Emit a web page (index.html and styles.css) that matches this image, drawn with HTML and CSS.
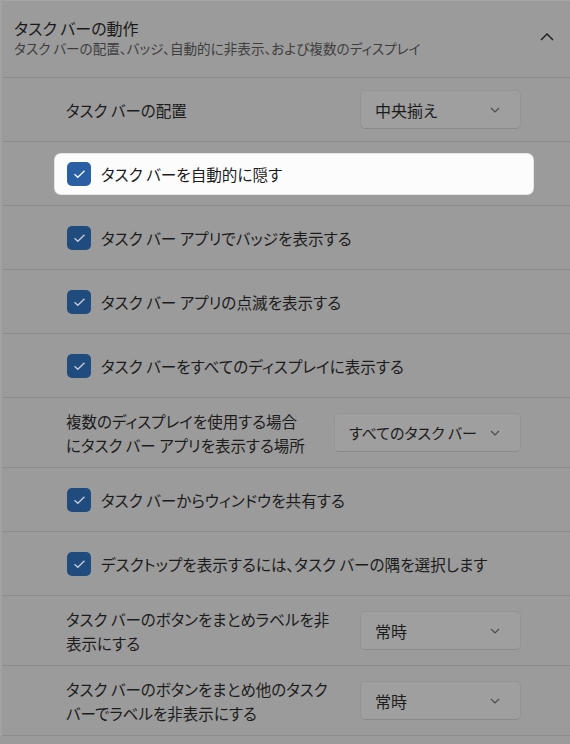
FILE: index.html
```html
<!DOCTYPE html>
<html lang="ja">
<head>
  <meta charset="UTF-8">
  <meta name="viewport" content="width=device-width, initial-scale=1.0">
  <title>タスク バーの動作</title>
  <link rel="stylesheet" href="styles.css">
</head>
<body>
  <div class="panel">
    <div class="panel-head">
      <div>
        <h2>タスク バーの動作</h2>
        <p class="sub">タスク バーの配置、バッジ、自動的に非表示、および複数のディスプレイ</p>
      </div>
      <svg class="collapse" width="14" height="9" viewBox="0 0 14 9"><path d="M1 8 L7 2 L13 8" fill="none" stroke="#1b1b1b" stroke-width="1.4"/></svg>
    </div>

    <div class="row">
      <span class="label">タスク バーの配置</span>
      <div class="select">中央揃え<svg class="arrow" width="10" height="6" viewBox="0 0 10 6"><path d="M1 1 L5 5 L9 1" fill="none" stroke="#4a4a4a" stroke-width="1.1"/></svg></div>
    </div>

    <div class="row">
      <label class="check focus"><span class="box"><svg width="13" height="10" viewBox="0 0 13 10"><path d="M1.5 5.2 L4.8 8.3 L11.5 1.8" fill="none" stroke="#fff" stroke-width="1.2"/></svg></span>タスク バーを自動的に隠す</label>
    </div>

    <div class="row">
      <label class="check"><span class="box"><svg width="13" height="10" viewBox="0 0 13 10"><path d="M1.5 5.2 L4.8 8.3 L11.5 1.8" fill="none" stroke="#c9cfd8" stroke-width="1.2"/></svg></span>タスク バー アプリでバッジを表示する</label>
    </div>

    <div class="row">
      <label class="check"><span class="box"><svg width="13" height="10" viewBox="0 0 13 10"><path d="M1.5 5.2 L4.8 8.3 L11.5 1.8" fill="none" stroke="#c9cfd8" stroke-width="1.2"/></svg></span>タスク バー アプリの点滅を表示する</label>
    </div>

    <div class="row">
      <label class="check"><span class="box"><svg width="13" height="10" viewBox="0 0 13 10"><path d="M1.5 5.2 L4.8 8.3 L11.5 1.8" fill="none" stroke="#c9cfd8" stroke-width="1.2"/></svg></span>タスク バーをすべてのディスプレイに表示する</label>
    </div>

    <div class="row tall">
      <span class="label">複数のディスプレイを使用する場合<br>にタスク バー アプリを表示する場所</span>
      <div class="select wide">すべてのタスク バー<svg class="arrow" width="10" height="6" viewBox="0 0 10 6"><path d="M1 1 L5 5 L9 1" fill="none" stroke="#4a4a4a" stroke-width="1.1"/></svg></div>
    </div>

    <div class="row">
      <label class="check"><span class="box"><svg width="13" height="10" viewBox="0 0 13 10"><path d="M1.5 5.2 L4.8 8.3 L11.5 1.8" fill="none" stroke="#c9cfd8" stroke-width="1.2"/></svg></span>タスク バーからウィンドウを共有する</label>
    </div>

    <div class="row">
      <label class="check"><span class="box"><svg width="13" height="10" viewBox="0 0 13 10"><path d="M1.5 5.2 L4.8 8.3 L11.5 1.8" fill="none" stroke="#c9cfd8" stroke-width="1.2"/></svg></span>デスクトップを表示するには、タスク バーの隅を選択します</label>
    </div>

    <div class="row tall">
      <span class="label">タスク バーのボタンをまとめラベルを非<br>表示にする</span>
      <div class="select">常時<svg class="arrow" width="10" height="6" viewBox="0 0 10 6"><path d="M1 1 L5 5 L9 1" fill="none" stroke="#4a4a4a" stroke-width="1.1"/></svg></div>
    </div>

    <div class="row tall">
      <span class="label">タスク バーのボタンをまとめ他のタスク<br>バーでラベルを非表示にする</span>
      <div class="select">常時<svg class="arrow" width="10" height="6" viewBox="0 0 10 6"><path d="M1 1 L5 5 L9 1" fill="none" stroke="#4a4a4a" stroke-width="1.1"/></svg></div>
    </div>
  </div>
</body>
</html>
```

FILE: styles.css
```css
*{margin:0;padding:0;box-sizing:border-box;}
body{background:#9b9b9b;font-family:"Noto Sans CJK JP","Noto Sans",sans-serif;font-feature-settings:"palt";color:#1c1c1c;}
.panel{border-top:1px solid #a4a4a4;border-left:2px solid #a2a2a2;}
.panel-head{height:77px;display:flex;align-items:center;justify-content:space-between;padding:0 16px 4px 12px;border-bottom:1px solid #8d8d8d;}
h2{font-size:16px;font-weight:400;line-height:22px;color:#1a1a1a;}
.sub{font-size:13.6px;line-height:18px;color:#3e3e3e;}
.collapse{margin-top:-2px;}
.row{height:64px;display:flex;align-items:center;justify-content:space-between;padding:0 49px 0 64px;border-bottom:1px solid #8d8d8d;}
.row.tall{height:70px;}
.label{font-size:15.5px;line-height:24px;}
.select{width:161px;height:39px;display:flex;align-items:center;justify-content:space-between;padding:0 20px 0 14px;font-size:16px;background:#9f9f9f;border:1px solid #949494;border-bottom-color:#8a8a8a;border-radius:5px;}
.select.wide{width:187px;padding-left:14px;font-size:15px;}
.row:has(.check){padding:0 37px 0 53px;}
.check{flex:1;height:40px;display:flex;align-items:center;gap:10px;padding-left:12px;font-size:15.6px;border-radius:6px;}
.check.focus{background:#fcfcfc;box-shadow:0 0 0 1px #e6e6e6;}
.box{width:24px;height:24px;border-radius:5px;background:#1f4b7e;display:flex;align-items:center;justify-content:center;}
.focus .box{background:#2a5fa3;}
```
